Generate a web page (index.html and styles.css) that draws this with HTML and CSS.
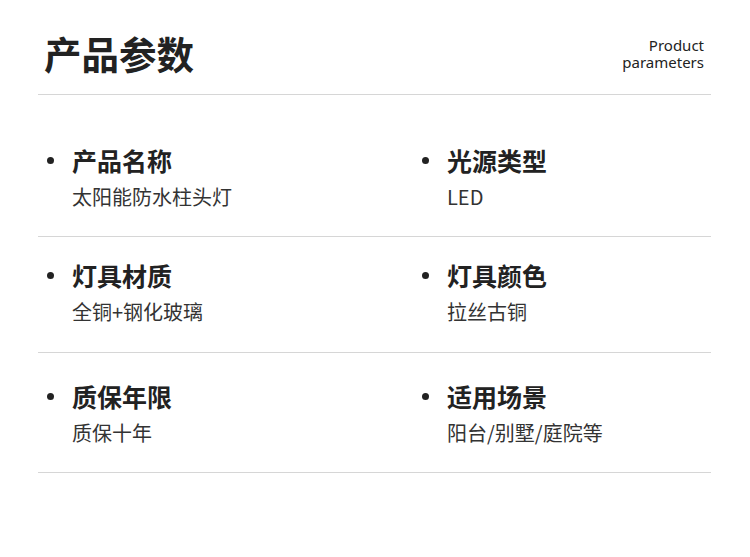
FILE: index.html
```html
<!DOCTYPE html>
<html lang="zh">
<head>
<meta charset="utf-8">
<link rel="stylesheet" href="styles.css">
</head>
<body>
<div class="page">
  <header class="header">
    <h1 class="title">产品参数</h1>
    <div class="subtitle">Product<br>parameters</div>
  </header>
  <section class="row first">
    <div class="item"><span class="dot"></span><div><div class="label">产品名称</div><div class="value">太阳能防水柱头灯</div></div></div>
    <div class="item"><span class="dot"></span><div><div class="label">光源类型</div><div class="value">LED</div></div></div>
  </section>
  <section class="row second">
    <div class="item"><span class="dot"></span><div><div class="label">灯具材质</div><div class="value">全铜+钢化玻璃</div></div></div>
    <div class="item"><span class="dot"></span><div><div class="label">灯具颜色</div><div class="value">拉丝古铜</div></div></div>
  </section>
  <section class="row third">
    <div class="item"><span class="dot"></span><div><div class="label">质保年限</div><div class="value">质保十年</div></div></div>
    <div class="item"><span class="dot"></span><div><div class="label">适用场景</div><div class="value">阳台/别墅/庭院等</div></div></div>
  </section>
</div>
</body>
</html>
```
FILE: styles.css
```css
* { box-sizing: border-box; margin: 0; padding: 0; }
html, body { background: #fff; }
body {
  font-family: "Noto Sans CJK SC", "Noto Sans", sans-serif;
  color: #222;
}
.page {
  width: 673px;
  margin-left: 38px;
}
.header {
  display: flex;
  justify-content: space-between;
  align-items: center;
  padding: 29px 7px 17px 6px;
  border-bottom: 1px solid #d6d6d6;
}
.title {
  font-size: 37.5px;
  line-height: 48px;
  font-weight: 700;
  color: #222;
}
.subtitle {
  font-family: "Noto Sans", sans-serif;
  font-size: 15px;
  line-height: 17px;
  margin-top: 2px;
  text-align: right;
  color: #222;
}
.row {
  display: grid;
  grid-template-columns: 375px 1fr;
  padding: 22px 0 25px;
  border-bottom: 1px solid #d6d6d6;
}
.row.first { padding-top: 49px; }
.row.second { padding-bottom: 26px; }
.row.third { padding-top: 27px; }
.item {
  display: flex;
  align-items: flex-start;
  padding-left: 9px;
}
.dot {
  width: 7px;
  height: 7px;
  border-radius: 50%;
  background: #222;
  margin-top: 13px;
  margin-right: 18px;
  flex: none;
}
.label {
  font-size: 25px;
  line-height: 32px;
  font-weight: 700;
  color: #222;
}
.value {
  margin-top: 7px;
  font-size: 20px;
  line-height: 28px;
  color: #333;
}
```
